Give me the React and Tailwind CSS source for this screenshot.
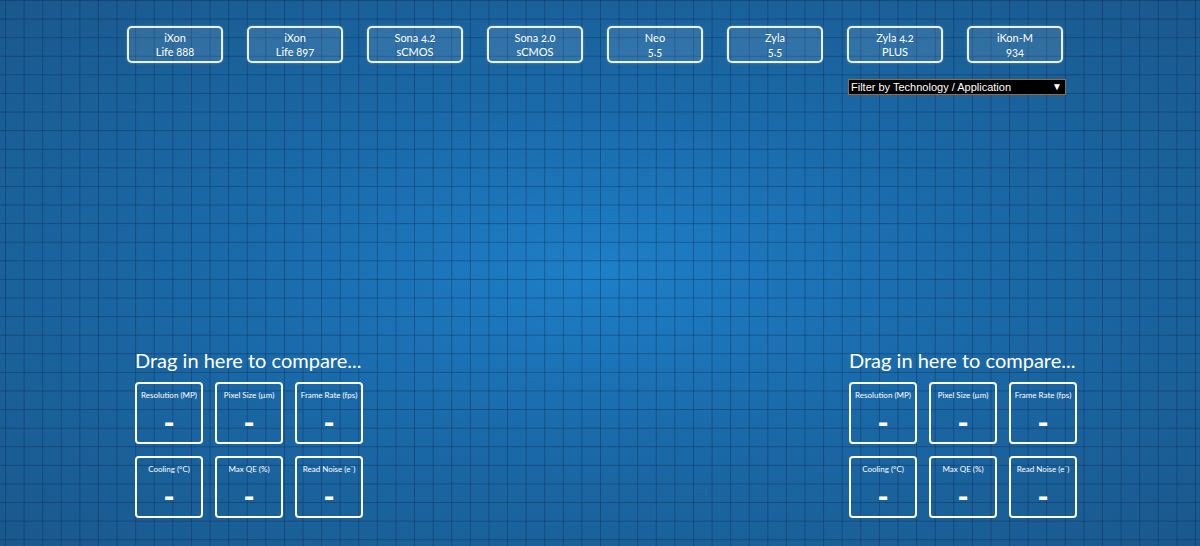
import React from "react";

const cameras = [
    ["iXon", "Life 888"],
    ["iXon", "Life 897"],
    ["Sona 4.2", "sCMOS"],
    ["Sona 2.0", "sCMOS"],
    ["Neo", "5.5"],
    ["Zyla", "5.5"],
    ["Zyla 4.2", "PLUS"],
    ["iKon-M", "934"],
];

const specs = [
    "Resolution (MP)",
    "Pixel Size (µm)",
    "Frame Rate (fps)",
    "Cooling (°C)",
    "Max QE (%)",
    "Read Noise (e⁻)",
];

function CameraButton({ top, bottom }) {
    return (
        <button className="w-[96px] h-[37px] flex flex-col items-center justify-center border-2 border-white/90 rounded-[5px] bg-white/10 text-white text-[11px] leading-[14px] font-['Lato',sans-serif] [font-variant-numeric:oldstyle-nums] shadow-[0_0_2px_rgba(255,255,255,0.4)]">
            <span>{top}</span>
            <span>{bottom}</span>
        </button>
    );
}

function CompareZone() {
    return (
        <div className="flex flex-col w-[228px]">
            <h2 className="text-white text-[20px] leading-[24px] font-['Lato',sans-serif] whitespace-nowrap">
                Drag in here to compare...
            </h2>
            <div className="grid grid-cols-3 gap-[12px] mt-[10px] w-[228px]">
                {specs.map((label) => (
                    <div
                        key={label}
                        className="w-[68px] h-[62px] border-2 border-white rounded-[4px] flex flex-col items-center pt-[6px] text-white font-['Lato',sans-serif]">
                        <span className="text-[8px] leading-[11px] whitespace-nowrap">{label}</span>
                        <span className="text-[30px] leading-[26px] font-black mt-[8px]">-</span>
                    </div>
                ))}
            </div>
        </div>
    );
}

export default function App() {
    return (
        <div className="min-h-screen w-full flex flex-col bg-[linear-gradient(rgba(10,40,80,0.4)_1px,transparent_1px),linear-gradient(90deg,rgba(10,40,80,0.4)_1px,transparent_1px),radial-gradient(ellipse_at_center,#1e7fc8_0%,#1a69a8_45%,#1a588c_100%)] bg-[size:18.6px_18.6px,18.6px_18.6px,100%_100%] bg-[position:0_0,5px_0,0_0]">
            <div className="flex gap-[24px] pl-[127px] pt-[26px]">
                {cameras.map(([a, b]) => (
                    <CameraButton key={a + b} top={a} bottom={b} />
                ))}
            </div>
            <div className="pl-[848px] mt-[16px]">
                <div className="w-[218px] h-[16px] bg-black border border-[#9a6a3a] flex items-center justify-between px-[2px] text-white text-[11px] leading-[14px] font-['Liberation_Sans',Arial,sans-serif]">
                    <span>Filter by Technology / Application</span>
                    <span className="text-[10px] pr-[1px]">▼</span>
                </div>
            </div>
            <div className="mt-auto flex justify-between pl-[135px] pr-[123px] pb-[28px]">
                <CompareZone />
                <CompareZone />
            </div>
        </div>
    );
}
